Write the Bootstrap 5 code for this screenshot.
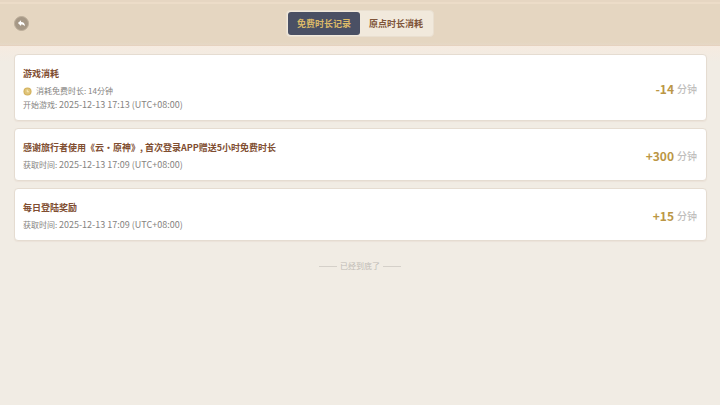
<!DOCTYPE html>
<html lang="zh-CN">
<head>
<meta charset="utf-8">
<meta name="viewport" content="width=device-width, initial-scale=1">
<title>免费时长记录</title>
<link rel="stylesheet" href="https://cdn.jsdelivr.net/npm/bootstrap@5.3.0/dist/css/bootstrap.min.css">
<style>
  body { background: #f1ece4; font-family: "Noto Sans CJK SC", sans-serif; font-size: 8px; line-height: 12px; color: #858381; }
  .topbar { height: 46px; padding: 2px 14px 0; background: linear-gradient(#e6d6c2 0 2px, #ecdcc8 2px 4px, #e5d6c1 4px 42px, #e6d8c6); border-bottom: 1px solid #e6d2bf; }
  .side { flex: 1 1 0; }
  .back { width: 15px; height: 15px; background: #a69886; border: 1px solid #bcae9a; color: #fff; }
  .switcher { background: #f1e9dc; border: 1px solid #e9dfd0; border-radius: 4px; padding: 1px; }
  .switcher .nav-link { width: 72px; padding: 0; border: 0; border-radius: 3px; background: transparent; font-size: 9px; line-height: 23px; font-weight: 700; color: #7f5539; }
  .switcher .nav-link.active { background: #4a5064; color: #dcba68; }
  .records { padding: 8px 13px 0 14px; gap: 7px; background: linear-gradient(#f6ebe0, #f1ece4 16px); }
  .record { background: #fff; border: 1px solid #e5dcd1; border-radius: 4px; padding: 11px 9px 8px 8px; box-shadow: 0 1px 1px #ebe3d9; }
  .record h2 { font-size: 9px; line-height: 16px; font-weight: 700; color: #804d30; margin: 0 0 2px; }
  .record p { margin: 0; line-height: 14px; }
  .record time { font-size: 9px; }
  .amount { font-size: 12px; line-height: 16px; font-weight: 700; color: #bb9645; gap: 3px; }
  .amount small { font-size: 10px; font-weight: 500; color: #c0bebc; }
  .finish { color: #c0bbb5; margin-top: 19px; gap: 3px; }
  .finish span { width: 18px; border-top: 1px solid #d5d0c9; }
</style>
</head>
<body>
<header class="topbar d-flex align-items-center">
  <div class="side d-flex">
    <button type="button" class="back btn rounded-circle p-0 d-flex align-items-center justify-content-center" aria-label="返回">
      <svg width="9" height="9" viewBox="0 0 10 10" fill="currentColor" aria-hidden="true"><path d="M1 4.400 4.500 1.300v1.900c2.800.1 4.400 1.600 4.300 4.800C7.800 6.600 6.500 6 4.500 6v1.700z"/></svg>
    </button>
  </div>
  <nav class="switcher nav flex-nowrap" role="tablist">
    <button type="button" class="nav-link active" role="tab" aria-selected="true">免费时长记录</button>
    <button type="button" class="nav-link" role="tab" aria-selected="false">原点时长消耗</button>
  </nav>
  <div class="side"></div>
</header>
<main>
  <div class="records d-flex flex-column">
    <article class="record d-flex align-items-center justify-content-between">
      <div>
        <h2>游戏消耗</h2>
        <p class="d-flex align-items-center gap-1">
          <svg width="9" height="9" viewBox="0 0 10 10" aria-hidden="true"><circle cx="5" cy="5" r="4.500" fill="#d4b35f"/><circle cx="5" cy="5" r="3.200" fill="#dfc47a"/><path d="M4.700 3v2.300h1.800" fill="none" stroke="#fff3c8"/></svg>
          消耗免费时长: 14分钟
        </p>
        <p>开始游戏: <time>2025-12-13 17:13 (UTC+08:00)</time></p>
      </div>
      <div class="amount d-flex align-items-center">-14 <small>分钟</small></div>
    </article>
    <article class="record d-flex align-items-center justify-content-between">
      <div>
        <h2>感谢旅行者使用《云・原神》, 首次登录APP赠送5小时免费时长</h2>
        <p>获取时间: <time>2025-12-13 17:09 (UTC+08:00)</time></p>
      </div>
      <div class="amount d-flex align-items-center">+300 <small>分钟</small></div>
    </article>
    <article class="record d-flex align-items-center justify-content-between">
      <div>
        <h2>每日登陆奖励</h2>
        <p>获取时间: <time>2025-12-13 17:09 (UTC+08:00)</time></p>
      </div>
      <div class="amount d-flex align-items-center">+15 <small>分钟</small></div>
    </article>
  </div>
  <div class="finish d-flex align-items-center justify-content-center"><span></span>已经到底了<span></span></div>
</main>
<script src="https://cdn.jsdelivr.net/npm/bootstrap@5.3.0/dist/js/bootstrap.bundle.min.js"></script>
</body>
</html>
